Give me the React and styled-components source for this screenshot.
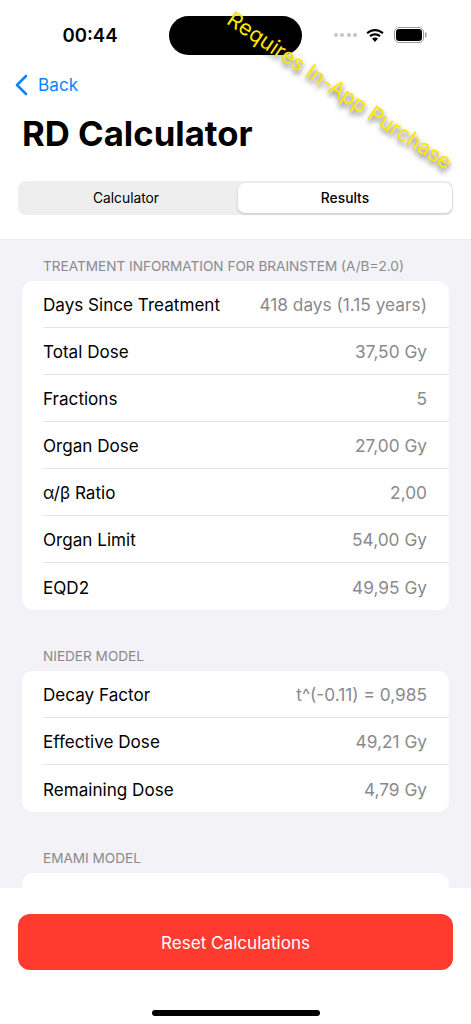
import styled, { createGlobalStyle } from "styled-components"

const GlobalStyle = createGlobalStyle`
  html, body {
    margin: 0;
    padding: 0;
    background: #fff;
  }
  * {
    box-sizing: border-box;
  }
`

const Page = styled.div`
  position: relative;
  width: 471px;
  height: 1024px;
  overflow: hidden;
  display: flex;
  flex-direction: column;
  background: #fff;
  font-family: Inter, "Liberation Sans", sans-serif;
`
const StatusBar = styled.div`
  height: 70px;
  flex: none;
  display: grid;
  grid-template-columns: 169px 133px 1fr;
  align-items: center;
`
const Time = styled.div`
  font-size: 18.6px;
  font-weight: 600;
  color: #000;
  text-align: center;
  padding-left: 11px;
`
const Island = styled.div`
  width: 133px;
  height: 39px;
  border-radius: 20px;
  background: #000;
`
const StatusIcons = styled.div`
  display: flex;
  align-items: center;
  gap: 9px;
  padding-left: 32px;
`
const Dots = styled.div`
  display: flex;
  gap: 2.4px;
  margin-right: -1px;
`
const Dot = styled.span`
  width: 4px;
  height: 4px;
  border-radius: 50%;
  background: #c4c4c4;
`
const NavRow = styled.div`
  height: 29px;
  flex: none;
  display: flex;
  align-items: center;
  padding-left: 14px;
  color: #0a84ff;
  font-size: 17.2px;
  gap: 10px;
`
const Title = styled.h1`
  margin: 0;
  height: 82px;
  flex: none;
  padding: 12px 0 0 22px;
  font-size: 34.7px;
  line-height: 44px;
  font-weight: 700;
  color: #000;
`
const SegmentWrap = styled.div`
  flex: none;
  height: 58px;
  padding: 0 18px;
`
const Segments = styled.div`
  height: 34px;
  border-radius: 8px;
  background: #eeeeef;
  display: grid;
  grid-template-columns: 216px 1fr;
  gap: 4px;
  padding: 2px 1px 2px 0;
`
const Segment = styled.div`
  display: flex;
  align-items: center;
  justify-content: center;
  font-size: 13.8px;
  font-weight: ${props => props.$active ? 500 : 400};
  color: #000;
  border-radius: 7px;
  background: ${props => props.$active ? "#fff" : "transparent"};
  box-shadow: ${props => props.$active ? "0 1px 3px rgba(0,0,0,0.18)" : "none"};
`
const Content = styled.div`
  flex: none;
  height: 649px;
  overflow: hidden;
  background: #f2f2f7;
  border-top: 1px solid #ededf0;
  padding: 0 22px;
`
const SectionLabel = styled.div`
  height: ${props => props.$first ? "41px" : "44px"};
  padding: ${props => props.$first ? "18px" : "21px"} 0 0 21px;
  font-size: 13.6px;
  line-height: 17px;
  color: #8a8a8e;
  white-space: nowrap;
`
const Card = styled.div`
  background: #fff;
  border-radius: 11px;
  margin-bottom: 17px;
`
const Row = styled.div`
  height: 47px;
  margin-left: 21px;
  padding: 1px 22px 0 0;
  display: flex;
  align-items: center;
  justify-content: space-between;
  font-size: 17.1px;
  border-bottom: ${props => props.$last ? "none" : "1px solid #e4e4e6"};
`
const Label = styled.span`
  color: #000;
`
const Value = styled.span`
  color: #8a8a8e;
  font-size: 17.3px;
`
const Footer = styled.div`
  flex: 1;
  display: flex;
  flex-direction: column;
  align-items: center;
  background: #fff;
  padding: 26px 18px 0;
`
const ResetButton = styled.button`
  width: 100%;
  height: 56px;
  border: none;
  border-radius: 12px;
  background: #ff3b30;
  color: #fff;
  font-family: inherit;
  font-size: 17.1px;
`
const HomeBar = styled.div`
  width: 168px;
  height: 6px;
  margin-top: 40px;
  border-radius: 3px;
  background: #000;
`
const Banner = styled.div`
  position: absolute;
  left: 340px;
  top: 90px;
  transform: translate(-50%, -50%) rotate(33.8deg);
  font-size: 21.5px;
  color: #ffe600;
  white-space: nowrap;
  text-shadow: 2px 3px 5px rgba(0, 0, 0, 0.6);
`

const BackChevron = () => (
  <svg width="14" height="24" viewBox="0 0 14 24" fill="none" stroke="#0a84ff" strokeWidth="2.6" strokeLinecap="round" strokeLinejoin="round">
    <path d="M12 3 L3 12 L12 21" />
  </svg>
)

const WifiIcon = () => (
  <svg width="20" height="15" viewBox="0 0 20 15" fill="#000">
    <path d="M10 3.200c2.800 0 5.300 1.100 7.200 2.900l1.400-1.600C16.300 2.300 13.300 1 10 1S3.700 2.300 1.400 4.500l1.400 1.600C4.700 4.300 7.200 3.200 10 3.200z" />
    <path d="M10 7.400c1.700 0 3.100.6 4.300 1.700l1.400-1.600C14.200 6 12.200 5.200 10 5.200S5.800 6 4.300 7.500l1.400 1.600C6.900 8 8.300 7.400 10 7.400z" />
    <path d="M10 9.400c-1.200 0-2.200.4-3 1.200L10 14l3-3.400c-.8-.8-1.800-1.200-3-1.200z" />
  </svg>
)

const BatteryIcon = () => (
  <svg width="34" height="16" viewBox="0 0 34 16">
    <rect x="0.5" y="0.5" width="29" height="15" rx="4.500" fill="none" stroke="#9a9a9a" />
    <rect x="2" y="2" width="26" height="12" rx="3.200" fill="#000" />
    <rect x="31" y="5.500" width="1.500" height="5" rx="0.700" fill="#9a9a9a" />
  </svg>
)

const sections = [
  {
    title: "TREATMENT INFORMATION FOR BRAINSTEM (A/B=2.0)",
    rows: [
      ["Days Since Treatment", "418 days (1.15 years)"],
      ["Total Dose", "37,50 Gy"],
      ["Fractions", "5"],
      ["Organ Dose", "27,00 Gy"],
      ["α/β Ratio", "2,00"],
      ["Organ Limit", "54,00 Gy"],
      ["EQD2", "49,95 Gy"],
    ],
  },
  {
    title: "NIEDER MODEL",
    rows: [
      ["Decay Factor", "t^(-0.11) = 0,985"],
      ["Effective Dose", "49,21 Gy"],
      ["Remaining Dose", "4,79 Gy"],
    ],
  },
  {
    title: "EMAMI MODEL",
    rows: [["", ""]],
  },
]

const App = () => {
  return (
    <Page>
      <GlobalStyle />
      <StatusBar>
        <Time>00:44</Time>
        <Island />
        <StatusIcons>
          <Dots>
            <Dot />
            <Dot />
            <Dot />
            <Dot />
          </Dots>
          <WifiIcon />
          <BatteryIcon />
        </StatusIcons>
      </StatusBar>
      <NavRow>
        <BackChevron />
        Back
      </NavRow>
      <Title>RD Calculator</Title>
      <SegmentWrap>
        <Segments>
          <Segment>Calculator</Segment>
          <Segment $active>Results</Segment>
        </Segments>
      </SegmentWrap>
      <Content>
        {sections.map((section, i) => (
          <div key={section.title}>
            <SectionLabel $first={i === 0}>{section.title}</SectionLabel>
            <Card>
              {section.rows.map((row, j) => (
                <Row key={j} $last={j === section.rows.length - 1}>
                  <Label>{row[0]}</Label>
                  <Value>{row[1]}</Value>
                </Row>
              ))}
            </Card>
          </div>
        ))}
      </Content>
      <Footer>
        <ResetButton>Reset Calculations</ResetButton>
        <HomeBar />
      </Footer>
      <Banner>Requires In-App Purchase</Banner>
    </Page>
  )
}

export default App
